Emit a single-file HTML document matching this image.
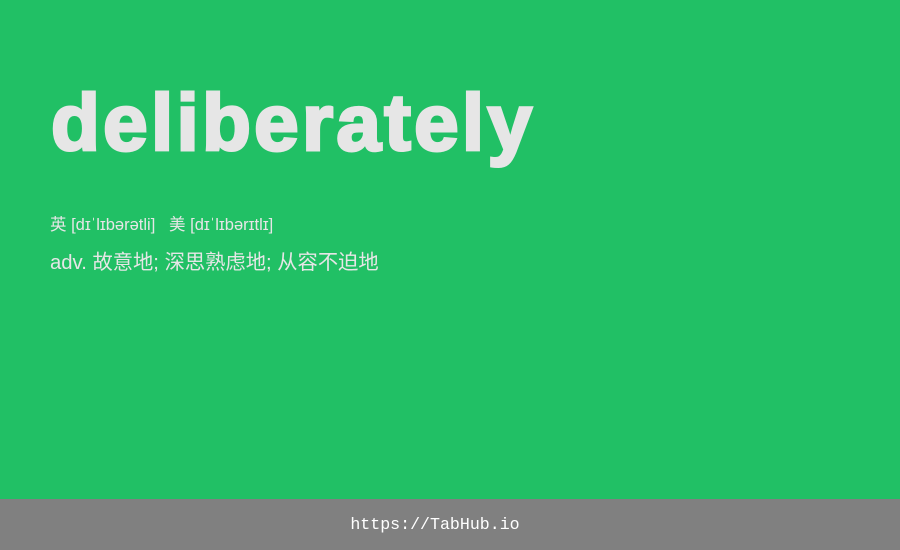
<!DOCTYPE html>
<html><head><meta charset="utf-8"><style>
html,body{margin:0;padding:0}
body{width:900px;height:550px;background:#21c065;position:relative;overflow:hidden;font-family:"Liberation Sans","Noto Sans CJK SC",sans-serif;color:#e6e6e6}
h1{position:absolute;left:51px;top:73px;margin:0;font-size:80px;font-weight:bold;line-height:100px;letter-spacing:3.3px;-webkit-text-stroke:3px #e6e6e6}
.ph{position:absolute;left:50px;top:211px;font-size:16.5px}
.df{position:absolute;left:50px;top:245px;font-size:20.3px}
.ft{position:absolute;left:0;top:499px;width:900px;box-sizing:border-box;padding-right:30px;height:51px;background:#808080;color:#fff;font-family:"Liberation Mono",monospace;font-size:16.6px;text-align:center;line-height:52px;overflow:hidden}
</style></head><body>
<h1>deliberately</h1>
<div class="ph">英 [dɪˈlɪbərətli]&nbsp;&nbsp;&nbsp;美 [dɪˈlɪbərɪtlɪ]</div>
<div class="df">adv. 故意地; 深思熟虑地; 从容不迫地</div>
<div class="ft">https://TabHub.io</div>
</body></html>
